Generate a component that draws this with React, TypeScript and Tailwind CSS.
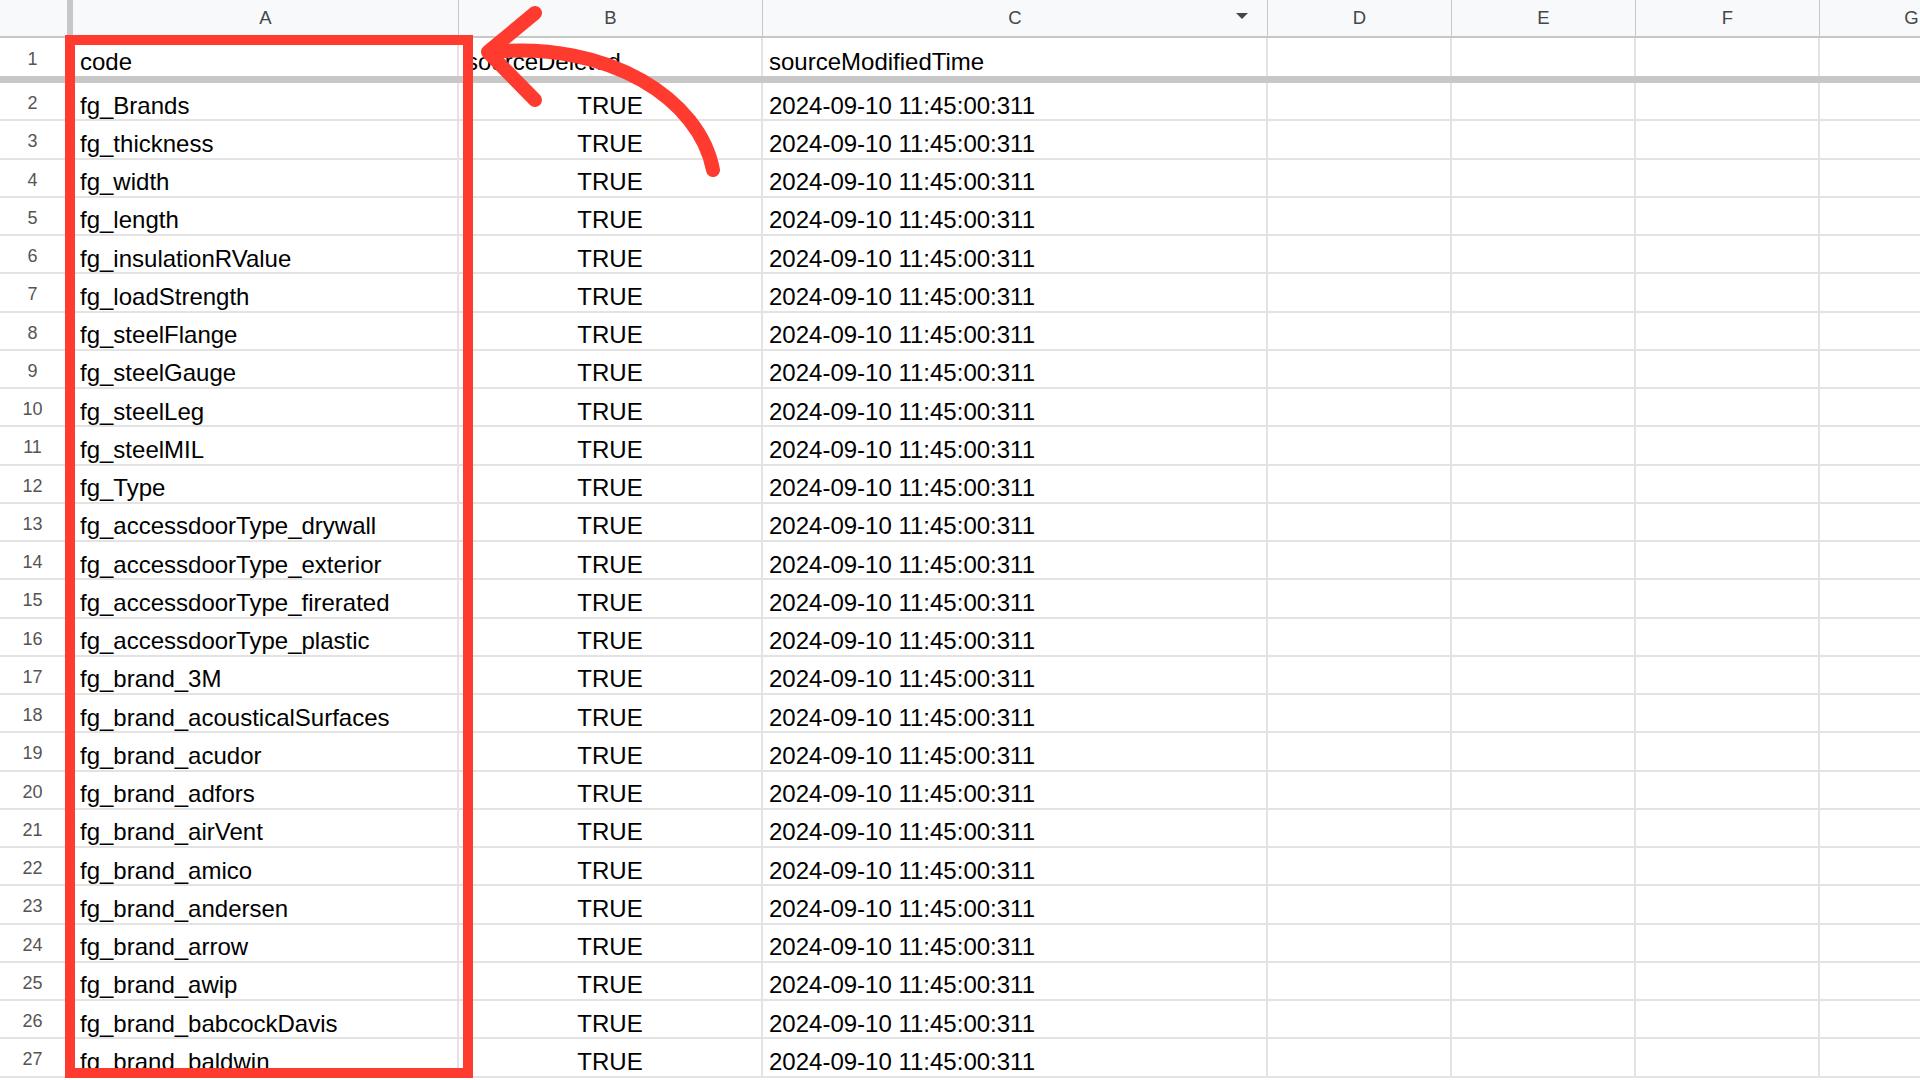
import React from 'react';

const codes = [
  'fg_Brands',
  'fg_thickness',
  'fg_width',
  'fg_length',
  'fg_insulationRValue',
  'fg_loadStrength',
  'fg_steelFlange',
  'fg_steelGauge',
  'fg_steelLeg',
  'fg_steelMIL',
  'fg_Type',
  'fg_accessdoorType_drywall',
  'fg_accessdoorType_exterior',
  'fg_accessdoorType_firerated',
  'fg_accessdoorType_plastic',
  'fg_brand_3M',
  'fg_brand_acousticalSurfaces',
  'fg_brand_acudor',
  'fg_brand_adfors',
  'fg_brand_airVent',
  'fg_brand_amico',
  'fg_brand_andersen',
  'fg_brand_arrow',
  'fg_brand_awip',
  'fg_brand_babcockDavis',
  'fg_brand_baldwin',
];

const TIME = '2024-09-10 11:45:00:311';

function HeaderRow() {
  const cell = 'shrink-0 h-full flex items-center justify-center border-r border-[#c7c7c7] text-[18.5px] text-[#444746]';
  return (
    <div className="flex h-[38px] shrink-0 bg-[#f8f9fa] border-b-2 border-[#c7c7c7]">
      <div className="w-[67px] shrink-0 h-full" />
      <div className="w-[6px] shrink-0 h-full bg-[#c7c7c7]" />
      <div className={`${cell} w-[386px]`}>A</div>
      <div className={`${cell} w-[304px]`}>B</div>
      <div className={`${cell} w-[505px] relative`}>
        C
        <svg className="absolute right-[18px] top-[12px]" width="14" height="8" viewBox="0 0 14 8">
          <path d="M1 1 L13 1 L7 7 Z" fill="#444746" />
        </svg>
      </div>
      <div className={`${cell} w-[184px]`}>D</div>
      <div className={`${cell} w-[184px]`}>E</div>
      <div className={`${cell} w-[184px]`}>F</div>
      <div className={`${cell} w-[184px]`}>G</div>
    </div>
  );
}

function Row({ num, a, b, c, center, height }: { num: number; a: string; b: string; c: string; center: boolean; height: string }) {
  const cell = 'shrink-0 h-full flex items-center pt-[9px] border-r-2 border-[#e3e3e3] whitespace-nowrap overflow-hidden';
  return (
    <div className={`flex shrink-0 ${height}`}>
      <div className="w-[73px] shrink-0 h-full flex items-center justify-center pr-[6px] pt-[5px] border-r-2 border-[#e3e3e3] text-[18px] text-[#555]">
        {num}
      </div>
      <div className={`${cell} w-[386px] pl-[7px]`}>{a}</div>
      <div className={`${cell} w-[304px] ${center ? 'justify-center' : 'pl-[7px]'}`}>{b}</div>
      <div className={`${cell} w-[505px] pl-[6px]`}>{c}</div>
      <div className={`${cell} w-[184px]`} />
      <div className={`${cell} w-[184px]`} />
      <div className={`${cell} w-[184px]`} />
      <div className={`${cell} w-[184px]`} />
    </div>
  );
}

export default function App() {
  return (
    <div className="relative w-[1920px] h-[1080px] overflow-hidden bg-white font-['Liberation_Sans',Arial,sans-serif] text-[24px] text-black">
      <div className="flex flex-col w-[2100px]">
        <HeaderRow />
        <Row num={1} a="code" b="sourceDeleted" c="sourceModifiedTime" center={false} height="h-[38px]" />
        <div className="h-[7px] shrink-0 bg-[#c7c7c7]" />
        {codes.map((code, i) => (
          <div key={code} className="border-b-2 border-[#e3e3e3] h-[38.25px] shrink-0 flex">
            <Row num={i + 2} a={code} b="TRUE" c={TIME} center height="h-full" />
          </div>
        ))}
      </div>

      {/* annotation overlay */}
      <svg className="absolute inset-0 pointer-events-none" width="1920" height="1080" viewBox="0 0 1920 1080">
        <rect x="70" y="40" width="398" height="1033" fill="none" stroke="#ff3b30" strokeWidth="10" />
        <path d="M713 170 C700 100, 610 40, 490 52" fill="none" stroke="#ff3b30" strokeWidth="14" strokeLinecap="round" />
        <path d="M535 13 L488 52 L535 100" fill="none" stroke="#ff3b30" strokeWidth="14" strokeLinecap="round" strokeLinejoin="round" />
      </svg>
    </div>
  );
}
